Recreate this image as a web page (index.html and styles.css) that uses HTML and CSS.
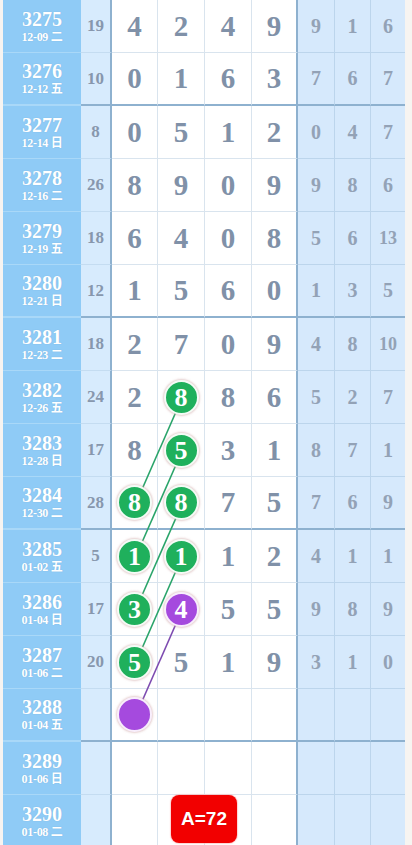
FILE: index.html
```html
<!DOCTYPE html>
<html lang="zh">
<head>
<meta charset="utf-8">
<title>走势图</title>
<link rel="stylesheet" href="styles.css">
</head>
<body>
<div class="board">
  <svg class="lines" width="412" height="845" viewBox="0 0 412 845">
    <line x1="182.5" y1="397" x2="136" y2="503" class="g"/>
    <line x1="182.5" y1="450" x2="136" y2="556" class="g"/>
    <line x1="182.5" y1="503" x2="136" y2="609" class="g"/>
    <line x1="182.5" y1="556" x2="136" y2="662" class="g"/>
    <line x1="182.5" y1="609" x2="136" y2="715" class="p"/>
  </svg>

  <div class="row"><div class="n"><b>3275</b><i>12-09 二</i></div><div class="s">19</div><div class="m">4</div><div class="m">2</div><div class="m">4</div><div class="m">9</div><div class="r">9</div><div class="r">1</div><div class="r">6</div></div>
  <div class="row end"><div class="n"><b>3276</b><i>12-12 五</i></div><div class="s">10</div><div class="m">0</div><div class="m">1</div><div class="m">6</div><div class="m">3</div><div class="r">7</div><div class="r">6</div><div class="r">7</div></div>

  <div class="row"><div class="n"><b>3277</b><i>12-14 日</i></div><div class="s">8</div><div class="m">0</div><div class="m">5</div><div class="m">1</div><div class="m">2</div><div class="r">0</div><div class="r">4</div><div class="r">7</div></div>
  <div class="row"><div class="n"><b>3278</b><i>12-16 二</i></div><div class="s">26</div><div class="m">8</div><div class="m">9</div><div class="m">0</div><div class="m">9</div><div class="r">9</div><div class="r">8</div><div class="r">6</div></div>
  <div class="row"><div class="n"><b>3279</b><i>12-19 五</i></div><div class="s">18</div><div class="m">6</div><div class="m">4</div><div class="m">0</div><div class="m">8</div><div class="r">5</div><div class="r">6</div><div class="r two">13</div></div>
  <div class="row end"><div class="n"><b>3280</b><i>12-21 日</i></div><div class="s">12</div><div class="m">1</div><div class="m">5</div><div class="m">6</div><div class="m">0</div><div class="r">1</div><div class="r">3</div><div class="r">5</div></div>

  <div class="row"><div class="n"><b>3281</b><i>12-23 二</i></div><div class="s">18</div><div class="m">2</div><div class="m">7</div><div class="m">0</div><div class="m">9</div><div class="r">4</div><div class="r">8</div><div class="r two">10</div></div>
  <div class="row"><div class="n"><b>3282</b><i>12-26 五</i></div><div class="s">24</div><div class="m">2</div><div class="m"><span class="ball">8</span></div><div class="m">8</div><div class="m">6</div><div class="r">5</div><div class="r">2</div><div class="r">7</div></div>
  <div class="row"><div class="n"><b>3283</b><i>12-28 日</i></div><div class="s">17</div><div class="m">8</div><div class="m"><span class="ball">5</span></div><div class="m">3</div><div class="m">1</div><div class="r">8</div><div class="r">7</div><div class="r">1</div></div>
  <div class="row end"><div class="n"><b>3284</b><i>12-30 二</i></div><div class="s">28</div><div class="m"><span class="ball">8</span></div><div class="m"><span class="ball">8</span></div><div class="m">7</div><div class="m">5</div><div class="r">7</div><div class="r">6</div><div class="r">9</div></div>

  <div class="row"><div class="n"><b>3285</b><i>01-02 五</i></div><div class="s">5</div><div class="m"><span class="ball">1</span></div><div class="m"><span class="ball">1</span></div><div class="m">1</div><div class="m">2</div><div class="r">4</div><div class="r">1</div><div class="r">1</div></div>
  <div class="row"><div class="n"><b>3286</b><i>01-04 日</i></div><div class="s">17</div><div class="m"><span class="ball">3</span></div><div class="m"><span class="ball purple">4</span></div><div class="m">5</div><div class="m">5</div><div class="r">9</div><div class="r">8</div><div class="r">9</div></div>
  <div class="row"><div class="n"><b>3287</b><i>01-06 二</i></div><div class="s">20</div><div class="m"><span class="ball">5</span></div><div class="m">5</div><div class="m">1</div><div class="m">9</div><div class="r">3</div><div class="r">1</div><div class="r">0</div></div>
  <div class="row end"><div class="n"><b>3288</b><i>01-04 五</i></div><div class="s"></div><div class="m"><span class="ball purple"></span></div><div class="m"></div><div class="m"></div><div class="m"></div><div class="r"></div><div class="r"></div><div class="r"></div></div>

  <div class="row"><div class="n"><b>3289</b><i>01-06 日</i></div><div class="s"></div><div class="m"></div><div class="m"></div><div class="m"></div><div class="m"></div><div class="r"></div><div class="r"></div><div class="r"></div></div>
  <div class="row"><div class="n"><b>3290</b><i>01-08 二</i></div><div class="s"></div><div class="m"></div><div class="m"></div><div class="m"></div><div class="m"></div><div class="r"></div><div class="r"></div><div class="r"></div></div>

  <div class="badge">A=72</div>
</div>
</body>
</html>
```

FILE: styles.css
```css
* { box-sizing: border-box; }
html, body { margin: 0; padding: 0; }
body {
  background: #f7f4f1;
  width: 412px;
  height: 845px;
  overflow: hidden;
  font-family: "Liberation Serif", "Noto Sans CJK SC", serif;
}
.board {
  position: relative;
  margin-left: 3px;
  width: 402px;
}
.lines {
  position: absolute;
  left: -3px;
  top: 0;
  z-index: 1;
  pointer-events: none;
}
.lines line { stroke-width: 1.6; }
.lines .g { stroke: #2aa46a; }
.lines .p { stroke: #7d4bb0; }

.row {
  display: grid;
  grid-template-columns: 78px 31px 46px 47px 47px 46px 37px 36px 34px;
  height: 53px;
}
.row > div {
  display: flex;
  align-items: center;
  justify-content: center;
  border-bottom: 1px solid #d9e4ee;
  font-weight: bold;
}
.row.end > div { border-bottom: 2px solid #8eb1cf; }

.n {
  flex-direction: column;
  background: #8fcbf6;
  color: #fff;
  border-bottom-color: #a9d8f8 !important;
  gap: 1px;
  text-shadow: 0 0 1px rgba(60, 120, 170, 0.35);
}
.n b {
  font-size: 20px;
  line-height: 20px;
  margin-top: 1px;
}
.n i {
  font-style: normal;
  font-size: 12px;
  line-height: 15px;
  letter-spacing: -0.3px;
}
.s {
  background: #d7ebfd;
  color: #8797ad;
  font-size: 17px;
  border-right: 2px solid #8eb1cf;
  border-bottom-color: #c4dcf1 !important;
}
.row.end .s { border-bottom-color: #8eb1cf !important; }
.m {
  background: #fff;
  color: #8091a8;
  font-size: 29px;
  border-right: 1px solid #d9e4ee;
}
.m:nth-child(6) { border-right: 2px solid #8eb1cf; }
.r {
  background: #d6e9fc;
  color: #93a2b6;
  font-size: 20px;
  border-right: 1px solid #bcd5ec;
  border-bottom-color: #bcd5ec !important;
}
.row.end .r { border-bottom-color: #8eb1cf !important; }
.r:last-child { border-right: none; }
.r.two { font-size: 18px; }

.ball {
  position: relative;
  z-index: 2;
  width: 35px;
  height: 35px;
  border-radius: 50%;
  background: #1fb05c;
  border: 2px solid #f4fbf6;
  box-shadow: 0 0 2px 1px rgba(210, 170, 170, 0.55);
  color: #fff;
  font-size: 26px;
  line-height: 31px;
  text-align: center;
  font-weight: bold;
}
.ball.purple { background: #a54ade; border-color: #f8eefc; }

.badge {
  position: absolute;
  z-index: 3;
  left: 168px;
  top: 795px;
  width: 66px;
  height: 48px;
  border-radius: 8px;
  background: #f20000;
  color: #fff;
  font-family: "Liberation Sans", Arial, sans-serif;
  font-weight: bold;
  font-size: 19px;
  display: flex;
  align-items: center;
  justify-content: center;
  box-shadow: 0 0 1px 1px rgba(255, 180, 180, 0.6);
  text-shadow: 0 0 1px rgba(120,0,0,0.4);
}
```
